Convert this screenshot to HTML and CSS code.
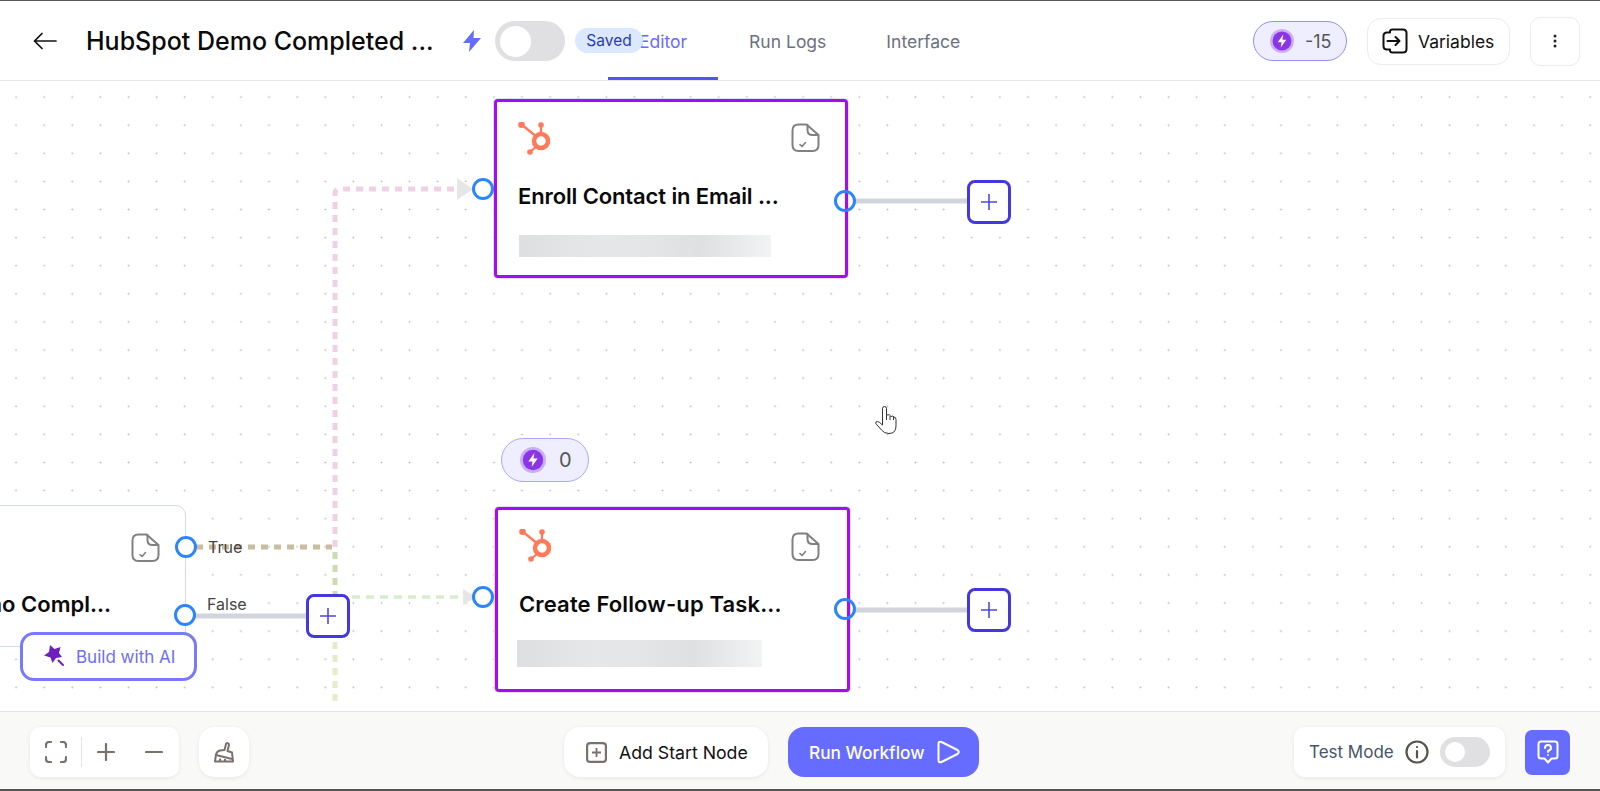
FILE: index.html
```html
<!DOCTYPE html>
<html lang="en">
<head>
<meta charset="utf-8">
<title>HubSpot Demo Completed</title>
<link rel="stylesheet" href="styles.css">
</head>
<body>
<div class="app">
  <header class="hdr">
    <button class="back" aria-label="Back">
      <svg width="24" height="18" viewBox="0 0 24 18" fill="none" stroke="#111" stroke-width="1.700" stroke-linecap="round" stroke-linejoin="round"><path d="M23 9H1.500M9 1.500 1.500 9 9 16.500"/></svg>
    </button>
    <h1 class="wf-title">HubSpot Demo Completed ...</h1>
    <svg class="bolt" width="18" height="22" viewBox="0 0 18 22"><path d="M11 0 0 13h7l-1 9 12-14h-7.500z" fill="#666cff"/></svg>
    <div class="switch switch-lg"><span class="knob"></span></div>
    <nav class="tabs">
      <a class="tab tab-on">Editor</a>
      <a class="tab">Run Logs</a>
      <a class="tab tab-last">Interface</a>
    </nav>
    <span class="saved">Saved</span>
    <div class="hdr-right">
      <div class="credit credit-top">
        <svg width="24" height="24" viewBox="0 0 28 28"><circle cx="14" cy="14" r="14" fill="#c9aef5"/><circle cx="14" cy="14" r="11" fill="#8b35e6"/><path d="M15.500 6.500 9 15.500h4.500l-1 6 6.500-9h-4.500z" fill="#fff"/></svg>
        <span>-15</span>
      </div>
      <button class="btn-vars">
        <svg width="26" height="26" viewBox="0 0 26 26" fill="none" stroke="#111" stroke-width="2" stroke-linecap="round" stroke-linejoin="round"><path d="M8 4.500V3.500Q8 1.500 10.500 1.500H21Q24.500 1.500 24.500 5V21Q24.500 24.500 21 24.500H10.500Q8 24.500 8 22.500V21.500M8 21.500H5Q1.500 21.500 1.500 18V8Q1.500 4.500 5 4.500H8"/><path d="M5.500 13H17M13.500 9l4 4-4 4"/></svg>
        <span>Variables</span>
      </button>
      <button class="btn-more" aria-label="More">
        <svg width="4" height="14" viewBox="0 0 4 14" fill="#222"><circle cx="2" cy="2" r="1.500"/><circle cx="2" cy="7" r="1.500"/><circle cx="2" cy="12" r="1.500"/></svg>
      </button>
    </div>
  </header>

  <main class="canvas">
    <svg class="edges" width="1600" height="630" viewBox="0 81 1600 630" fill="none">
      <path d="M335 547V194Q335 189 340 189H462" stroke="#efd0e4" stroke-width="5" stroke-dasharray="7 6"/>
      <path d="M196 547H332" stroke="#c9bda0" stroke-width="5" stroke-dasharray="7 6"/>
      <path d="M335 552V594" stroke="#cbdcaf" stroke-width="5" stroke-dasharray="7 6"/>
      <path d="M335 642V702" stroke="#e6ecc8" stroke-width="5" stroke-dasharray="7 6"/>
      <path d="M352 597H466" stroke="#d8edcc" stroke-width="3.500" stroke-dasharray="8 6"/>
      <path d="M457 178 473 189 457 200z" fill="#e6e6e6"/>
      <path d="M463 589 476 597 463 605z" fill="#e6e6e6"/>
      <path d="M195 616H306M855 201H967M855 610H967" stroke="#d1d5db" stroke-width="5"/>
    </svg>

    <div class="node node-left">
      <svg class="note" width="29" height="29" viewBox="0 0 28 29" fill="none" stroke="#808080" stroke-width="2" stroke-linecap="round" stroke-linejoin="round"><path d="M7 1.500H15L27 12V22Q27 28 21 28H7Q1 28 1 22V7.500Q1 1.500 7 1.500Z"/><path d="M16 2V7Q16 12 21 12H26.500"/><path d="M8.500 21.500l2 2 3.500-4" stroke-width="1.600"/></svg>
      <div class="node-title">Demo Compl...</div>
    </div>

    <div class="node node-sel node-a">
      <div class="node-top">
        <svg class="hs" width="32" height="33" viewBox="0 0 32 33"><g stroke="#ff7a59" fill="none"><circle cx="23" cy="19" r="7" stroke-width="4.500"/><path d="M3.500 2.500 19 15M23 3V12M12 30l7-6" stroke-width="2.300"/></g><g fill="#ff7a59"><circle cx="3.500" cy="2.800" r="3.300"/><circle cx="23" cy="3" r="2.800"/><circle cx="12" cy="30" r="2.800"/></g></svg>
        <svg class="note" width="29" height="29" viewBox="0 0 28 29" fill="none" stroke="#808080" stroke-width="2" stroke-linecap="round" stroke-linejoin="round"><path d="M7 1.500H15L27 12V22Q27 28 21 28H7Q1 28 1 22V7.500Q1 1.500 7 1.500Z"/><path d="M16 2V7Q16 12 21 12H26.500"/><path d="M8.500 21.500l2 2 3.500-4" stroke-width="1.600"/></svg>
      </div>
      <div class="node-title">Enroll Contact in Email ...</div>
      <div class="blur blur-a"></div>
    </div>

    <div class="credit credit-node">
      <svg width="26" height="26" viewBox="0 0 28 28"><circle cx="14" cy="14" r="14" fill="#c9aef5"/><circle cx="14" cy="14" r="11" fill="#8b35e6"/><path d="M15.500 6.500 9 15.500h4.500l-1 6 6.500-9h-4.500z" fill="#fff"/></svg>
      <span>0</span>
    </div>

    <div class="node node-sel node-b">
      <div class="node-top">
        <svg class="hs" width="32" height="33" viewBox="0 0 32 33"><g stroke="#ff7a59" fill="none"><circle cx="23" cy="19" r="7" stroke-width="4.500"/><path d="M3.500 2.500 19 15M23 3V12M12 30l7-6" stroke-width="2.300"/></g><g fill="#ff7a59"><circle cx="3.500" cy="2.800" r="3.300"/><circle cx="23" cy="3" r="2.800"/><circle cx="12" cy="30" r="2.800"/></g></svg>
        <svg class="note" width="29" height="29" viewBox="0 0 28 29" fill="none" stroke="#808080" stroke-width="2" stroke-linecap="round" stroke-linejoin="round"><path d="M7 1.500H15L27 12V22Q27 28 21 28H7Q1 28 1 22V7.500Q1 1.500 7 1.500Z"/><path d="M16 2V7Q16 12 21 12H26.500"/><path d="M8.500 21.500l2 2 3.500-4" stroke-width="1.600"/></svg>
      </div>
      <div class="node-title">Create Follow-up Task...</div>
      <div class="blur blur-b"></div>
    </div>

    <span class="port port-a-in"></span>
    <span class="port port-a-out"></span>
    <span class="port port-b-in"></span>
    <span class="port port-b-out"></span>
    <span class="port port-true"></span>
    <span class="port port-false"></span>

    <span class="edge-label label-true">True</span>
    <span class="edge-label label-false">False</span>

    <button class="add add-false" aria-label="Add"><svg width="16" height="16" viewBox="0 0 16 16" stroke="#4f46e5" stroke-width="1.600"><path d="M8 0V16M0 8H16"/></svg></button>
    <button class="add add-a" aria-label="Add"><svg width="16" height="16" viewBox="0 0 16 16" stroke="#4f46e5" stroke-width="1.600"><path d="M8 0V16M0 8H16"/></svg></button>
    <button class="add add-b" aria-label="Add"><svg width="16" height="16" viewBox="0 0 16 16" stroke="#4f46e5" stroke-width="1.600"><path d="M8 0V16M0 8H16"/></svg></button>

    <button class="build-ai">
      <svg width="24" height="24" viewBox="0 0 24 24"><path d="M7 0l4.500 4 6-2-1.500 6 3 4-6 1-3.500 5-2-5.500L1 10.500 6 7z" fill="#6d1fc0"/><path d="M15.500 15.500 20 20" stroke="#6d1fc0" stroke-width="2" stroke-linecap="round"/></svg>
      <span>Build with AI</span>
    </button>

    <svg class="hand" width="22" height="28" viewBox="0 0 22 28" fill="#fff" stroke="#333" stroke-width="1" stroke-linejoin="round"><path d="M7.500 15V2.500Q7.500 .5 9.500 .5T11.500 2.500V9.500Q13 8 14.500 9T16 10.500Q18 9.500 19 11 21 11 21 13.500V20Q21 27.500 14 27.500 9 27.500 6.500 24L.8 17.500Q.2 15.500 2.500 15.500 4 15.500 7.500 19z"/><path d="M11.500 9.500V14M15 10V14M18.500 11V14" fill="none"/></svg>
  </main>

  <footer class="ftr">
    <div class="panel zoom-group">
      <svg class="fit" width="22" height="22" viewBox="0 0 22 22" fill="none" stroke="#78716c" stroke-width="2.200" stroke-linecap="round"><path d="M1 6V4Q1 1 4 1H6M16 1H18Q21 1 21 4V6M21 16V18Q21 21 18 21H16M6 21H4Q1 21 1 18V16"/></svg>
      <span class="vline"></span>
      <svg class="zplus" width="18" height="18" viewBox="0 0 18 18" stroke="#78716c" stroke-width="2.200" stroke-linecap="round"><path d="M9 1V17M1 9H17"/></svg>
      <svg class="zminus" width="18" height="18" viewBox="0 0 18 18" stroke="#78716c" stroke-width="2.200" stroke-linecap="round"><path d="M1 9H17"/></svg>
    </div>
    <button class="panel broom" aria-label="Clean up">
      <svg width="20" height="21" viewBox="0 0 20 21" fill="none" stroke="#78716c" stroke-width="2" stroke-linejoin="round"><path d="M10.500 8 12 2Q12.500 .8 13.800 1.200T15 3L13.500 9 18 10.500 19 19.500H1L2 12.500Q3 9 6 8.500z"/><path d="M2 13 18 17M6 19.500V16.500M11 19.500V17"/></svg>
    </button>
    <button class="panel add-start">
      <svg width="21" height="21" viewBox="0 0 21 21" fill="none" stroke="#78716c" stroke-width="2.200"><rect x="1.100" y="1.100" width="18.800" height="18.800" rx="3"/><path d="M10.500 6V15M6 10.500H15" stroke-width="1.800"/></svg>
      <span>Add Start Node</span>
    </button>
    <button class="run">
      <span>Run Workflow</span>
      <svg width="23" height="24" viewBox="0 0 23 24" fill="none" stroke="#fff" stroke-width="2" stroke-linejoin="round"><path d="M1.500 4Q1.500 .8 4.500 2L20.500 10Q23 12 20.500 14L4.500 22Q1.500 23.200 1.500 20z"/></svg>
    </button>
    <div class="panel test-mode">
      <span class="tm-label">Test Mode</span>
      <svg width="24" height="24" viewBox="0 0 24 24" fill="none" stroke="#57534e" stroke-width="2.200"><circle cx="12" cy="12" r="10.500"/><path d="M12 11V17.500" stroke-linecap="round"/><circle cx="12" cy="7" r=".7" fill="#57534e" stroke-width="1"/></svg>
      <div class="switch switch-sm"><span class="knob"></span></div>
    </div>
    <button class="help" aria-label="Help">
      <svg width="22" height="24" viewBox="0 0 22 24" fill="none" stroke="#fff" stroke-width="2" stroke-linejoin="round"><path d="M4 1.500H18Q20.500 1.500 20.500 4V16Q20.500 18.500 18 18.500H14.500L11 22.500 7.500 18.500H4Q1.500 18.500 1.500 16V4Q1.500 1.500 4 1.500Z"/><path d="M8 8Q8 5 11 5T14 8Q14 9.800 11 11V12" stroke-linecap="round"/><circle cx="11" cy="15" r=".5" fill="#fff" stroke-width="1"/></svg>
    </button>
  </footer>
</div>
</body>
</html>
```

FILE: styles.css
```css
* { box-sizing: border-box; }
html, body { margin: 0; padding: 0; }
body { font-family: "Inter", "Liberation Sans", sans-serif; color: #111; background: #fff; }
button { font: inherit; color: inherit; background: none; border: 0; padding: 0; cursor: pointer; }
svg { display: block; flex: none; }

.app { display: flex; flex-direction: column; width: 1600px; height: 791px; overflow: hidden; }

/* header */
.hdr { position: relative; display: flex; align-items: center; flex: none; height: 81px; border-top: 1px solid #555; border-bottom: 1px solid #e6e6ee; background: #fff; padding: 1px 0 0 33px; }
.back { width: 24px; margin-right: 29px; }
.wf-title { margin: 0; width: 377px; font-size: 25px; font-weight: 500; color: #0a0a0a; white-space: nowrap; }
.bolt { margin-right: 14px; }
.switch { position: relative; border-radius: 20px; background: #e0e0e3; display: flex; align-items: center; }
.switch-lg { width: 70px; height: 40px; padding-left: 5px; margin-right: 43px; }
.switch-lg .knob { width: 31px; height: 31px; }
.switch-sm { width: 50px; height: 30px; padding-left: 5px; }
.switch-sm .knob { width: 20px; height: 20px; }
.knob { display: block; border-radius: 50%; background: #fff; }
.tabs { display: flex; align-self: stretch; }
.tab { display: flex; align-items: center; padding: 3px 31px 0; font-size: 17.500px; color: #6b7280; border-bottom: 3px solid transparent; }
.tab-last { margin-left: -2px; }
.tab-on { color: #666cff; border-bottom-color: #5156ee; }
.saved { position: absolute; left: 575px; top: 27px; width: 68px; height: 25px; border-radius: 13px; background: #dbe8fd; color: #2b3bb5; font-size: 15.500px; display: flex; align-items: center; justify-content: center; }
.hdr-right { margin-left: auto; display: flex; align-items: center; padding-right: 20px; }
.credit { display: flex; align-items: center; border-radius: 22px; background: #eeeefe; border: 1px solid #8e91f7; color: #555; }
.credit-top { width: 94px; height: 40px; padding-left: 16px; gap: 11px; font-size: 18px; margin-right: 20px; }
.btn-vars { display: flex; align-items: center; gap: 10px; width: 143px; height: 47px; padding-left: 14px; border: 1px solid #ececf0; border-radius: 14px; font-size: 17.500px; margin-right: 20px; background: #fff; }
.btn-more { width: 50px; height: 49px; display: flex; align-items: center; justify-content: center; border: 1px solid #ececf0; border-radius: 10px; background: #fff; }

/* canvas */
.canvas { position: relative; flex: 1; overflow: hidden; background-color: #fff; background-image: radial-gradient(circle at center, #bcbcc0 0, #bcbcc0 .8px, transparent 1.1px); background-size: 28.12px 28.12px; background-position: 2px 2px; }
.edges { position: absolute; left: 0; top: 0; }
.node { position: absolute; background: #fff; }
.node-sel { border: 3px solid #a90af5; border-radius: 4px; box-shadow: 0 0 0 1px #dde2ea; }
.node-top { display: flex; justify-content: space-between; align-items: flex-start; }
.node-title { font-size: 22px; font-weight: 600; line-height: 30px; color: #0a0a0a; white-space: nowrap; }
.node-a { left: 494px; top: 18px; width: 354px; height: 179px; padding: 20px 25px 0 21px; }
.node-a .note { margin-top: 1px; }
.node-a .node-title { margin-top: 26px; letter-spacing: -.12px; }
.node-b { left: 495px; top: 426px; width: 355px; height: 185px; padding: 19px 27px 0 21px; }
.node-b .note { margin-top: 3px; }
.node-b .node-title { margin-top: 27px; letter-spacing: .14px; }
.node-left { left: -20px; top: 424px; width: 206px; height: 142px; border: 1px solid #d5dbe8; border-radius: 10px; padding: 27px 25px 0 0; display: flex; flex-direction: column; align-items: flex-end; overflow: hidden; }
.node-left .node-title { margin-top: 27px; margin-right: 49px; }
.blur { background: linear-gradient(90deg, #dedfe1 0%, #e6e7e8 32%, #e4e5e6 50%, #dfe0e2 72%, #f2f3f3 100%); }
.blur-a { width: 252px; height: 22px; margin-top: 24px; margin-left: 1px; }
.blur-b { width: 245px; height: 27px; margin-top: 21px; margin-left: -2px; }

.port { position: absolute; width: 22px; height: 22px; border-radius: 50%; border: 3px solid #2a85ff; }
.port-a-in { left: 472px; top: 97px; }
.port-a-out { left: 834px; top: 109px; }
.port-b-in { left: 472px; top: 505px; }
.port-b-out { left: 834px; top: 517px; }
.port-true { left: 175px; top: 455px; background: #fff; }
.port-false { left: 174px; top: 523px; background: #fff; }

.edge-label { position: absolute; font-size: 16px; line-height: 20px; color: #444; }
.label-true { left: 208px; top: 456px; }
.label-false { left: 207px; top: 513px; }

.add { position: absolute; width: 44px; height: 44px; display: flex; align-items: center; justify-content: center; background: #fff; border: 3px solid #4338e0; border-radius: 8px; }
.add-false { left: 306px; top: 513px; }
.add-a { left: 967px; top: 99px; }
.add-b { left: 967px; top: 507px; }

.credit-node { position: absolute; left: 501px; top: 357px; width: 88px; height: 44px; padding-left: 18px; gap: 13px; border-color: #a9abf8; font-size: 20px; }

.build-ai { position: absolute; left: 20px; top: 551px; width: 177px; height: 49px; display: flex; align-items: center; padding-left: 20px; gap: 9px; background: #fff; border: 3px solid #777bfb; border-radius: 14px; font-size: 17px; color: #6b6ffb; }
.hand { position: absolute; left: 875px; top: 325px; }

/* footer */
.ftr { display: flex; align-items: center; flex: none; height: 80px; padding: 3px 30px 0; background: #f9f9f7; border-top: 1px solid #e5e5e3; border-bottom: 2px solid #555; }
.panel { display: flex; align-items: center; height: 50px; background: #fff; box-shadow: 0 1px 4px rgba(0,0,0,.08); }
.zoom-group { width: 149px; border-radius: 10px; padding-left: 15px; margin-right: 20px; }
.vline { width: 1px; height: 30px; background: #e4e4ec; margin-left: 14px; margin-right: 15px; }
.zminus { margin-left: 30px; }
.broom { width: 50px; justify-content: center; border-radius: 15px; margin-right: 315px; }
.add-start { width: 204px; border-radius: 16px; padding-left: 22px; gap: 12px; font-size: 17.700px; margin-right: 20px; }
.run { display: flex; align-items: center; width: 191px; height: 50px; padding-left: 21px; gap: 12px; border-radius: 16px; background: #666cff; color: #fff; font-size: 17.300px; font-weight: 500; margin-right: 315px; }
.test-mode { width: 211px; border-radius: 10px; padding-left: 15px; gap: 11px; margin-right: 20px; }
.tm-label { font-size: 17px; color: #475569; }
.help { width: 45px; height: 45px; display: flex; align-items: center; justify-content: center; background: #666cff; border-radius: 7px; }
```
